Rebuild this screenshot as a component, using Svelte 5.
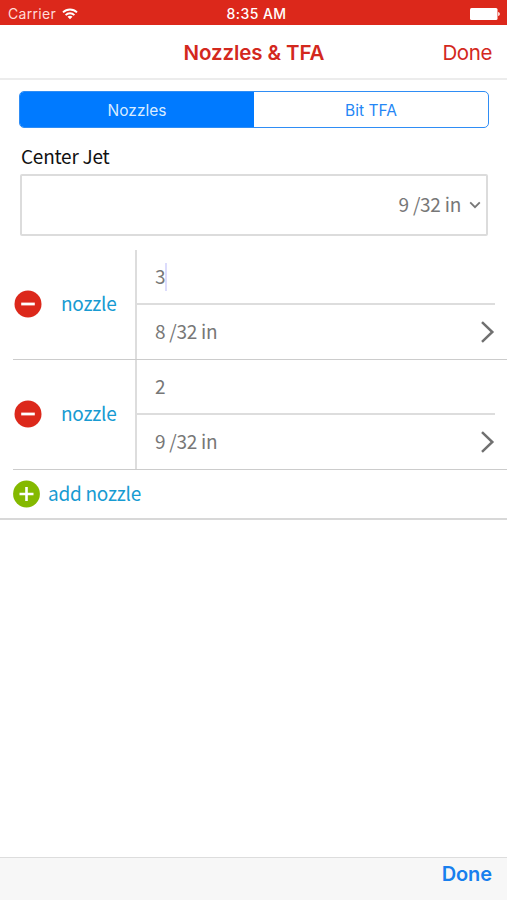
<script lang="ts">
  type Tab = "nozzles" | "tfa";

  interface Nozzle {
    id: number;
    count: string;
    size: string;
  }

  let tab = $state<Tab>("nozzles");
  let focused = $state(1);
  let nozzles = $state<Nozzle[]>([
    { id: 1, count: "3", size: "8 /32 in" },
    { id: 2, count: "2", size: "9 /32 in" },
  ]);

  const nextId = $derived(Math.max(0, ...nozzles.map((n) => n.id)) + 1);

  const addNozzle = (): void => {
    nozzles.push({ id: nextId, count: "1", size: "9 /32 in" });
  };

  const removeNozzle = (id: number): void => {
    nozzles = nozzles.filter((n) => n.id !== id);
  };
</script>

<div class="screen">
  <div class="status">
    <div class="carrier">
      <span>Carrier</span>
      <svg width="16" height="12" viewBox="0 0 16 12" fill="none" stroke="#fff" stroke-width="1.9">
        <path d="M1 4.4C4.9.6 11.1.6 15 4.4" />
        <path d="M3.6 7.1C6 4.7 10 4.7 12.4 7.1" />
        <path d="M8 11.3L5.5 8.8C6.9 7.5 9.1 7.5 10.5 8.8Z" fill="#fff" stroke="none" />
      </svg>
    </div>
    <span class="time">8:35 AM</span>
    <svg class="battery" width="30" height="12" viewBox="0 0 30 12" fill="#fff">
      <rect width="27.5" height="12" rx="1.5" />
      <path d="M28.2 4C30.3 4.4 30.3 7.6 28.2 8Z" />
    </svg>
  </div>

  <header>
    <h1>Nozzles &amp; TFA</h1>
    <button type="button" class="nav-done">Done</button>
  </header>

  <div class="segmented">
    <button type="button" class:active={tab === "nozzles"} onclick={() => (tab = "nozzles")}>Nozzles</button>
    <button type="button" class:active={tab === "tfa"} onclick={() => (tab = "tfa")}>Bit TFA</button>
  </div>

  <section class="center-jet">
    <h2>Center Jet</h2>
    <button type="button" class="select">
      <span>9 /32 in</span>
      <svg width="12" height="8" viewBox="0 0 12 8" fill="none" stroke="#777" stroke-width="1.8">
        <path d="M1.2 1.3L6 6.2L10.8 1.3" />
      </svg>
    </button>
  </section>

  <ul>
    {#each nozzles as nozzle (nozzle.id)}
      <li>
        <div class="name">
          <button type="button" class="round" aria-label="Remove nozzle" onclick={() => removeNozzle(nozzle.id)}>
            <svg width="28" height="28" viewBox="0 0 28 28">
              <circle cx="14" cy="14" r="13.5" fill="#dc281b" />
              <path d="M7.2 14H20.8" stroke="#fff" stroke-width="2.8" />
            </svg>
          </button>
          <span>nozzle</span>
        </div>
        <div class="fields">
          <button type="button" class="field count" onclick={() => (focused = nozzle.id)}>
            <span>{nozzle.count}</span>
            {#if focused === nozzle.id}<i class="caret"></i>{/if}
          </button>
          <button type="button" class="field">
            <span>{nozzle.size}</span>
            <svg width="15" height="22" viewBox="0 0 15 22" fill="none" stroke="#707070" stroke-width="2.5">
              <path d="M2 1.2L12.3 11L2 20.8" />
            </svg>
          </button>
        </div>
      </li>
    {/each}
  </ul>

  <button type="button" class="add" onclick={addNozzle}>
    <svg width="27" height="28" viewBox="0 0 27 28">
      <circle cx="13.5" cy="14" r="13.4" fill="#84b900" />
      <path d="M6.5 14H20.5M13.5 7V21" stroke="#fff" stroke-width="2.6" />
    </svg>
    <span>add nozzle</span>
  </button>

  <footer>
    <button type="button">Done</button>
  </footer>
</div>

<style>
  :global(body) {
    margin: 0;
  }

  .screen {
    display: flex;
    flex-direction: column;
    width: 507px;
    height: 900px;
    overflow: hidden;
    background: #fff;
    font-family: "Noto Sans CJK SC", "Noto Sans", sans-serif;
    font-size: 19px;
    line-height: 24px;
    letter-spacing: -0.25px;
    color: #777;
  }

  button {
    border: 0;
    padding: 0;
    background: none;
    font: inherit;
    letter-spacing: inherit;
    color: inherit;
    text-align: left;
    cursor: pointer;
  }

  button:focus {
    outline: none;
  }

  svg {
    display: block;
    flex: none;
  }

  .status,
  header {
    display: grid;
    grid-template-columns: 1fr auto 1fr;
    align-items: center;
    box-sizing: border-box;
    flex: none;
    font-family: Inter, Roboto, sans-serif;
  }

  .status {
    height: 25px;
    padding: 2px 7px 0 8px;
    background: #dc281b;
    font-size: 14px;
    color: #fff;
  }

  .carrier {
    display: flex;
    align-items: center;
    gap: 6px;
  }

  .carrier span {
    color: #ffdcd8;
    letter-spacing: 0.3px;
  }

  .time {
    padding-left: 5px;
    font-weight: 500;
    letter-spacing: 0.45px;
  }

  .battery {
    justify-self: end;
  }

  header {
    height: 55px;
    border-bottom: 2px solid #ececec;
    padding: 3px 15px 0;
    letter-spacing: 0;
    color: #d3281d;
  }

  h1 {
    grid-column: 2;
    margin: 0 0 0 1px;
    font-size: 20.5px;
    font-weight: 600;
    letter-spacing: -0.1px;
  }

  .nav-done {
    justify-self: end;
    font-size: 20.5px;
    letter-spacing: -0.4px;
  }

  .segmented {
    display: flex;
    box-sizing: border-box;
    flex: none;
    height: 37px;
    margin: 11px 18px 0 19px;
    border: 1.5px solid #2f8df5;
    border-radius: 5px;
    overflow: hidden;
    font-family: Inter, Roboto, sans-serif;
    font-size: 15.5px;
    letter-spacing: 0;
    color: #2586f5;
  }

  .segmented button {
    flex: 1;
    padding-top: 2px;
    text-align: center;
  }

  .segmented .active {
    background: #007aff;
    color: #d9ecff;
  }

  .center-jet {
    padding: 16px 19px 0 20px;
  }

  h2 {
    margin: 0 0 6px 1px;
    font-size: 19px;
    font-weight: 400;
    letter-spacing: -0.25px;
    color: #111;
  }

  .select {
    display: flex;
    align-items: center;
    justify-content: flex-end;
    gap: 8px;
    box-sizing: border-box;
    width: 100%;
    height: 62px;
    border: 2px solid #dcdcdc;
    border-radius: 2px;
    padding-right: 5px;
  }

  .select span,
  .name span,
  .field span,
  .add span {
    padding-bottom: 2px;
  }

  ul {
    margin: 14px 0 0;
    padding: 0;
    list-style: none;
  }

  li {
    display: flex;
    box-sizing: border-box;
    height: 110px;
    margin-left: 13px;
    border-bottom: 1.5px solid #ccc;
  }

  .name {
    display: flex;
    align-items: center;
    gap: 19px;
    box-sizing: border-box;
    width: 122px;
    padding-bottom: 2px;
    color: #189bd2;
  }

  .round {
    margin-left: 1px;
  }

  .fields {
    flex: 1;
    border-left: 2px solid #ddd;
  }

  .field {
    display: flex;
    align-items: center;
    justify-content: space-between;
    box-sizing: border-box;
    width: 100%;
    height: 54px;
    padding: 0 12px 0 18px;
  }

  .count {
    justify-content: flex-start;
    width: calc(100% - 12px);
    height: 55px;
    border-bottom: 2px solid #ddd;
  }

  .caret {
    width: 2px;
    height: 28px;
    background: #dcdcfc;
  }

  .add {
    display: flex;
    align-items: center;
    gap: 8px;
    box-sizing: border-box;
    flex: none;
    height: 50px;
    border-bottom: 2px solid #d8d8d8;
    padding-left: 13px;
    color: #189bd2;
  }

  footer {
    box-sizing: border-box;
    height: 43px;
    margin-top: auto;
    border-top: 1px solid #ddd;
    padding: 4px 15px 0;
    background: #f7f7f7;
    font-family: Inter, Roboto, sans-serif;
    font-size: 20px;
    font-weight: 600;
    letter-spacing: -0.1px;
    text-align: right;
    color: #187fee;
  }
</style>
